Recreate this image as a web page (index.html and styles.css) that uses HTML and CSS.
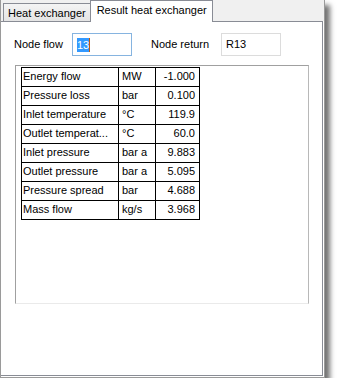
FILE: index.html
```html
<!DOCTYPE html>
<html>
    <head>
        <meta charset="utf-8">
        <title>Result heat exchanger</title>
        <link rel="stylesheet" href="styles.css">
    </head>
    <body>
        <div class="window">
            <div class="tabs">
                <div class="tab">Heat exchanger</div>
                <div class="tab active">Result heat exchanger</div>
            </div>
            <div class="panel">
                <div class="nodes">
                    <span class="label">Node flow</span>
                    <span class="field focus"><span class="sel">13</span><span class="caret"></span></span>
                    <span class="label">Node return</span>
                    <span class="field">R13</span>
                </div>
                <div class="gridbox">
                    <table class="result">
                        <colgroup>
                            <col class="c-name">
                            <col class="c-unit">
                            <col class="c-val">
                        </colgroup>
                        <tr><td>Energy flow</td><td>MW</td><td class="num">-1.000</td></tr>
                        <tr><td>Pressure loss</td><td>bar</td><td class="num">0.100</td></tr>
                        <tr><td>Inlet temperature</td><td>&deg;C</td><td class="num">119.9</td></tr>
                        <tr><td>Outlet temperat...</td><td>&deg;C</td><td class="num">60.0</td></tr>
                        <tr><td>Inlet pressure</td><td>bar a</td><td class="num">9.883</td></tr>
                        <tr><td>Outlet pressure</td><td>bar a</td><td class="num">5.095</td></tr>
                        <tr><td>Pressure spread</td><td>bar</td><td class="num">4.688</td></tr>
                        <tr><td>Mass flow</td><td>kg/s</td><td class="num">3.968</td></tr>
                    </table>
                </div>
            </div>
        </div>
    </body>
</html>
```

FILE: styles.css
```css
body{
    margin:0;
    padding:0;
    background:#fff;
    font:11px/1.2 "Liberation Sans", Arial, sans-serif;
    color:#000;
}
.window{
    width:323px;
    height:377px;
    border:1px solid #9a9a9a;
    border-top:0;
    background:#fff;
    box-shadow:5px 5px 5px rgba(0,0,0,.55);
}
.tabs{
    display:flex;
    align-items:flex-end;
    height:21px;
    padding-left:2px;
    background:#f0f0f0;
}
.tab{
    height:17px;
    line-height:18px;
    padding:0 4px 0 4px;
    border:1px solid #898c95;
    border-bottom:0;
    background:linear-gradient(#f4f4f4,#e4e4e4);
    white-space:nowrap;
}
.tab.active{
    position:relative;
    z-index:1;
    height:21px;
    line-height:19px;
    margin-bottom:-1px;
    margin-left:-1px;
    padding:0 5px 0 6px;
    background:#fff;
}
.panel{
    width:321px;
    height:353px;
    border:1px solid #898c95;
    border-left:0;
}
.nodes{
    display:flex;
    align-items:center;
    margin:11px 0 0 13px;
}
.label{
    width:58px;
}
.nodes .label + .field + .label{
    margin-left:19px;
    width:70px;
}
.field{
    display:flex;
    align-items:center;
    box-sizing:border-box;
    width:60px;
    height:23px;
    padding-left:4px;
    border:1px solid #dcdcdc;
}
.field.focus{
    border-color:#86b4e0;
}
.sel{
    background:#3399ff;
    color:#fff;
    line-height:14px;
}
.caret{
    width:1px;
    height:14px;
    background:#c25b0c;
}
.gridbox{
    width:287px;
    height:236px;
    margin:9px 0 0 14px;
    padding:1px 0 0 5px;
    border:1px solid #a0a0a0;
    border-right-color:#b8b8b8;
    border-bottom-color:#eaeaea;
}
.result{
    border-collapse:collapse;
    table-layout:fixed;
    width:179px;
}
.c-name{ width:97px; }
.c-unit{ width:37px; }
.c-val{ width:44px; }
.result td{
    height:18px;
    padding:0 1px;
    border:1px solid #000;
    white-space:nowrap;
    overflow:hidden;
}
.result td + td{
    padding-left:3px;
}
.result td.num{
    text-align:right;
    padding-right:4px;
}
```
